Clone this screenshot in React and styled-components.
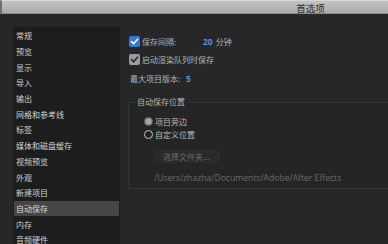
import React from "react";
import styled, { createGlobalStyle } from "styled-components";

const Global = createGlobalStyle`
  html, body { margin: 0; padding: 0; background: #272727; overflow: hidden; }
  #root { width: 388px; height: 244px; overflow: hidden; }
`;

const FONT = `"Noto Sans CJK SC", "Open Sans", sans-serif`;

const Window = styled.div`
  width: 388px;
  height: 244px;
  display: flex;
  flex-direction: column;
  background: #272727;
  font-family: ${FONT};
  overflow: hidden;
`;

const TitleBar = styled.div`
  flex: 0 0 auto;
  width: 618px;
  height: 14px;
  box-sizing: border-box;
  background: linear-gradient(#c2c2c2, #acacac);
  border-top: 1px solid #d6d6d6;
  border-bottom: 1px solid #8a8a8a;
  border-left: 2px solid #6e6e6e;
  display: flex;
  align-items: center;
  justify-content: center;
  font-size: 9.5px;
  line-height: 12px;
  color: #2b2b2b;
  padding-top: 1px;
  padding-left: 1px;
`;

const Body = styled.div`
  flex: 1;
  display: flex;
  padding-left: 13px;
  min-height: 0;
`;

const Sidebar = styled.div`
  flex: 0 0 107px;
  margin-top: 13px;
  background: #1d1d1d;
  padding-top: 1px;
  display: flex;
  flex-direction: column;
`;

const NavItem = styled.div`
  flex: 0 0 auto;
  height: 15.7px;
  margin: 0 1px;
  padding-left: 2px;
  display: flex;
  align-items: center;
  font-size: 8px;
  color: ${(p) => (p.$active ? "#d8d8d8" : "#d2d2d2")};
  background: ${(p) => (p.$active ? "#464646" : "transparent")};
  white-space: nowrap;
`;

const Content = styled.div`
  flex: 1;
  padding-left: 9px;
  padding-top: 21px;
  display: flex;
  flex-direction: column;
  min-width: 0;
`;

const Row = styled.div`
  display: flex;
  align-items: center;
  height: 12px;
  margin-top: ${(p) => p.$mt || 0}px;
  font-size: 8px;
  color: #b4b4b4;
  white-space: nowrap;
`;

const Check = styled.span`
  width: 11px;
  height: 11px;
  box-sizing: border-box;
  border-radius: 2px;
  background: ${(p) => (p.$blue ? "#2f7bd6" : "#9c9c9c")};
  display: inline-flex;
  align-items: center;
  justify-content: center;
  margin-right: 2px;
  flex: 0 0 auto;
`;

const Label = styled.span`
  width: ${(p) => (p.$w ? `${p.$w}px` : "auto")};
  padding-left: ${(p) => p.$pl || 0}px;
`;

const Num = styled.span`
  color: #4e95dd;
  font-family: "Open Sans", sans-serif;
  font-weight: 700;
  font-size: 8.5px;
  margin-right: 3px;
`;

const Group = styled.fieldset`
  margin: 13px 0 0 -1px;
  padding: 0 0 0 15px;
  border: 1px solid #333333;
  border-right: none;
  height: 92px;
  box-sizing: border-box;
  background: #252525;
  display: flex;
  flex-direction: column;
  min-width: 0;
`;

const Legend = styled.legend`
  margin-left: -8px;
  padding: 0 1px;
  font-size: 8px;
  line-height: 10px;
  color: #b4b4b4;
`;

const RadioRow = styled.div`
  display: flex;
  align-items: center;
  height: 12px;
  margin-top: ${(p) => p.$mt || 0}px;
  font-size: 8px;
  color: #b8b8b8;
`;

const Radio = styled.span`
  width: 9px;
  height: 9px;
  box-sizing: border-box;
  border-radius: 50%;
  margin-right: 2px;
  flex: 0 0 auto;
  ${(p) =>
    p.$on
      ? `background: radial-gradient(circle, #a8a8a8 0 2.6px, #8c8c8c 3px); border: 1px solid #6f6f6f;`
      : `background: #222; border: 1.5px solid #c4c4c4;`}
`;

const Button = styled.div`
  margin-top: 10px;
  margin-left: 10px;
  width: 65px;
  height: 13px;
  box-sizing: border-box;
  background: #2a2a2a;
  border: 1px solid #2e2e2e;
  border-radius: 2px;
  display: flex;
  align-items: center;
  padding-left: 8px;
  font-size: 8px;
  color: #6c6c6c;
  white-space: nowrap;
`;

const Path = styled.div`
  margin-top: 9px;
  margin-left: 10px;
  font-family: "Open Sans", sans-serif;
  font-size: 8.6px;
  line-height: 12px;
  color: #6a6a6a;
  white-space: nowrap;
`;

const CheckMark = ({ color }) => (
  <svg width="9" height="9" viewBox="0 0 9 9">
    <path d="M1.5 4.6 L3.6 6.8 L7.6 2.2" fill="none" stroke={color} strokeWidth="1.6" strokeLinecap="round" strokeLinejoin="round" />
  </svg>
);

const items = [
  "常规", "预览", "显示", "导入", "输出", "网格和参考线", "标签",
  "媒体和磁盘缓存", "视频预览", "外观", "新建项目", "自动保存", "内存", "音频硬件",
];

export default function App() {
  return (
    <Window>
      <Global />
      <TitleBar>首选项</TitleBar>
      <Body>
        <Sidebar>
          {items.map((t) => (
            <NavItem key={t} $active={t === "自动保存"}>{t}</NavItem>
          ))}
        </Sidebar>
        <Content>
          <Row>
            <Check $blue><CheckMark color="#ffffff" /></Check>
            <Label $w={61}>保存间隔:</Label>
            <Num>20</Num>
            <span>分钟</span>
          </Row>
          <Row $mt={6}>
            <Check><CheckMark color="#2a2a2a" /></Check>
            <Label>启动渲染队列时保存</Label>
          </Row>
          <Row $mt={7}>
            <Label $w={56} $pl={1}>最大项目版本:</Label>
            <Num>5</Num>
          </Row>
          <Group>
            <Legend>自动保存位置</Legend>
            <RadioRow $mt={8}>
              <Radio $on />
              <span>项目旁边</span>
            </RadioRow>
            <RadioRow $mt={1}>
              <Radio />
              <span>自定义位置</span>
            </RadioRow>
            <Button>选择文件夹...</Button>
            <Path>/Users/zhazha/Documents/Adobe/After Effects</Path>
          </Group>
        </Content>
      </Body>
    </Window>
  );
}
